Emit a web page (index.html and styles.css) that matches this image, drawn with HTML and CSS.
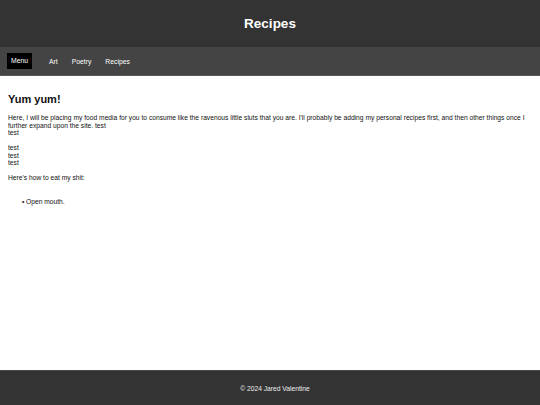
FILE: index.html
```html
<!DOCTYPE html>
<html lang="en">
<head>
<meta charset="utf-8">
<title>Recipes</title>
<link rel="stylesheet" href="styles.css">
</head>
<body>
<div class="page">
  <header class="site-header">
    <h1 class="site-title">Recipes</h1>
  </header>
  <nav class="site-nav">
    <span class="menu-btn">Menu</span>
    <a class="nav-link" href="#">Art</a>
    <a class="nav-link" href="#">Poetry</a>
    <a class="nav-link" href="#">Recipes</a>
  </nav>
  <main class="content">
    <h2 class="heading">Yum yum!</h2>
    <p class="text">Here, I will be placing my food media for you to consume like the ravenous little sluts that you are. I'll probably be adding my personal recipes first, and then other things once I further expand upon the site. test<br>test</p>
    <p class="text">test<br>test<br>test</p>
    <p class="text">Here's how to eat my shit:</p>
    <ul class="steps">
      <li class="step">Open mouth.</li>
    </ul>
  </main>
  <footer class="site-footer">
    <p class="copyright">© 2024 Jared Valentine</p>
  </footer>
</div>
</body>
</html>
```

FILE: styles.css
```css
html, body {
  margin: 0;
  padding: 0;
  height: 100%;
}

body {
  font-family: "Liberation Sans", Arial, sans-serif;
  font-size: 6.7px;
  color: #111;
  background: #fff;
}

.page {
  display: flex;
  flex-direction: column;
  min-height: 100%;
}

.site-header {
  background: #333333;
  height: 47px;
  display: flex;
  align-items: center;
  justify-content: center;
}

.site-title {
  margin: 0;
  color: #fff;
  font-size: 13.5px;
  font-weight: bold;
}

.site-nav {
  background: #444444;
  height: 28px;
  border-bottom: 1px solid #5a5a5a;
  display: flex;
  align-items: center;
  padding: 0 7px;
}

.menu-btn {
  background: #000;
  color: #fff;
  padding: 0 4px;
  height: 16px;
  line-height: 16px;
  margin-right: 10px;
  font-size: 6.8px;
}

.nav-link {
  color: #fff;
  text-decoration: none;
  padding: 0 7px;
  font-size: 6.8px;
}

.content {
  flex: 1;
  padding: 12px 1px 0 8px;
}

.heading {
  font-size: 11px;
  font-weight: bold;
  margin: 5px 0 9px;
}

.text {
  margin: 0 0 7.5px;
  line-height: 7.5px;
}

.steps {
  margin: 16px 0 0;
  padding-left: 18px;
  list-style: none;
  line-height: 7.5px;
}

.step::before {
  content: "•";
  display: inline-block;
  width: 4px;
  margin-left: -4px;
}

.site-footer {
  background: #333333;
  border-top: 1px solid #4a4a4a;
  height: 34px;
  display: flex;
  align-items: center;
  justify-content: center;
  padding-left: 10px;
}

.copyright {
  margin: 0;
  color: #eee;
}
```
